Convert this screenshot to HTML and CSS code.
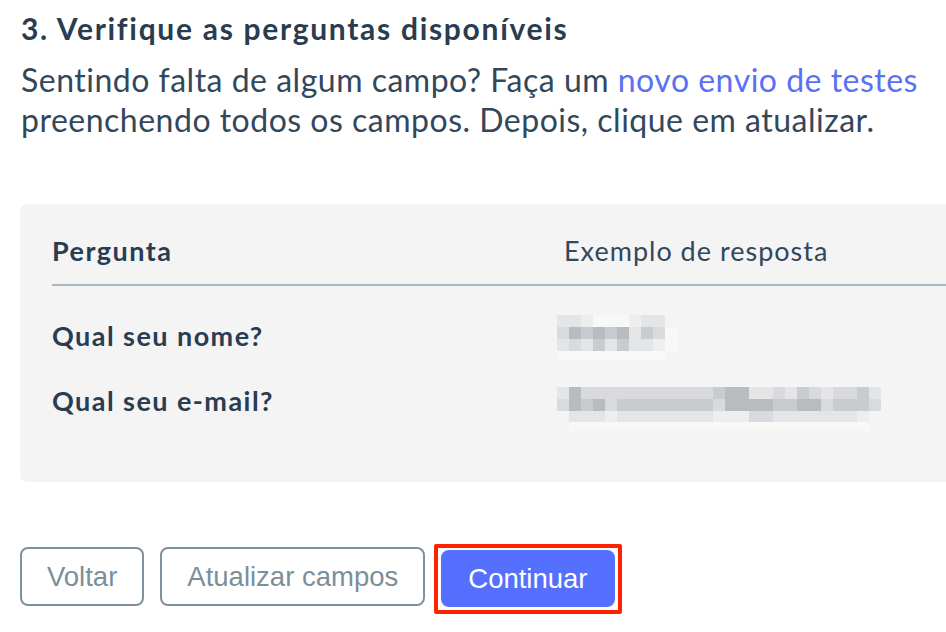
FILE: index.html
```html
<!DOCTYPE html>
<html lang="pt-BR">
<head>
<meta charset="utf-8">
<title>Verifique as perguntas</title>
<link rel="stylesheet" href="styles.css">
</head>
<body>
<main class="page">
  <h2 class="title">3. Verifique as perguntas disponíveis</h2>
  <p class="lead">Sentindo falta de algum campo? Faça um <a class="link" href="#">novo envio de testes</a> preenchendo todos os campos. Depois, clique em atualizar.</p>

  <section class="table-card">
    <div class="thead">
      <div class="th th-q">Pergunta</div>
      <div class="th th-a">Exemplo de resposta</div>
    </div>
    <div class="tbody">
      <div class="row">
        <div class="q">Qual seu nome?</div>
        <div class="a">
          <div class="blur blur-name">
            <i class="s3"></i><i class="s3"></i><i class="s2"></i><i class="s1"></i><i class="s1"></i><i class="s1"></i><i class="s2"></i><i class="s3"></i><i class="s3"></i><i class="s0"></i>
            <i class="s4"></i><i class="s6"></i><i class="s5"></i><i class="s6"></i><i class="s5"></i><i class="s6"></i><i class="s3"></i><i class="s5"></i><i class="s4"></i><i class="s1"></i>
            <i class="s3"></i><i class="s4"></i><i class="s3"></i><i class="s5"></i><i class="s3"></i><i class="s5"></i><i class="s3"></i><i class="s3"></i><i class="s2"></i><i class="s1"></i>
            <i class="s1"></i><i class="s1"></i><i class="s1"></i><i class="s1"></i><i class="s1"></i><i class="s1"></i><i class="s1"></i><i class="s1"></i><i class="s1"></i><i class="s0"></i>
          </div>
        </div>
      </div>
      <div class="row">
        <div class="q">Qual seu e-mail?</div>
        <div class="a">
          <div class="blur blur-mail">
            <i class="s3"></i><i class="s6"></i><i class="s4"></i><i class="s4"></i><i class="s4"></i><i class="s4"></i><i class="s4"></i><i class="s4"></i><i class="s4"></i><i class="s4"></i><i class="s4"></i><i class="s4"></i><i class="s4"></i><i class="s5"></i><i class="s6"></i><i class="s6"></i><i class="s3"></i><i class="s3"></i><i class="s4"></i><i class="s3"></i><i class="s5"></i><i class="s4"></i><i class="s3"></i><i class="s4"></i><i class="s4"></i><i class="s5"></i><i class="s3"></i>
            <i class="s4"></i><i class="s6"></i><i class="s5"></i><i class="s6"></i><i class="s4"></i><i class="s5"></i><i class="s5"></i><i class="s5"></i><i class="s5"></i><i class="s5"></i><i class="s5"></i><i class="s5"></i><i class="s5"></i><i class="s4"></i><i class="s6"></i><i class="s6"></i><i class="s6"></i><i class="s6"></i><i class="s5"></i><i class="s5"></i><i class="s6"></i><i class="s6"></i><i class="s4"></i><i class="s5"></i><i class="s5"></i><i class="s5"></i><i class="s4"></i>
            <i class="s0"></i><i class="s3"></i><i class="s3"></i><i class="s3"></i><i class="s2"></i><i class="s3"></i><i class="s3"></i><i class="s3"></i><i class="s3"></i><i class="s3"></i><i class="s3"></i><i class="s3"></i><i class="s3"></i><i class="s2"></i><i class="s2"></i><i class="s2"></i><i class="s4"></i><i class="s4"></i><i class="s3"></i><i class="s3"></i><i class="s3"></i><i class="s3"></i><i class="s3"></i><i class="s3"></i><i class="s3"></i><i class="s2"></i><i class="s0"></i>
            <i class="s0"></i><i class="s1"></i><i class="s1"></i><i class="s1"></i><i class="s1"></i><i class="s1"></i><i class="s1"></i><i class="s1"></i><i class="s1"></i><i class="s1"></i><i class="s1"></i><i class="s1"></i><i class="s1"></i><i class="s1"></i><i class="s1"></i><i class="s1"></i><i class="s1"></i><i class="s1"></i><i class="s1"></i><i class="s1"></i><i class="s1"></i><i class="s1"></i><i class="s1"></i><i class="s1"></i><i class="s1"></i><i class="s1"></i><i class="s0"></i>
          </div>
        </div>
      </div>
    </div>
  </section>

  <div class="actions">
    <button class="btn btn-outline" type="button">Voltar</button>
    <button class="btn btn-outline" type="button">Atualizar campos</button>
    <span class="highlight"><button class="btn btn-primary" type="button">Continuar</button></span>
  </div>
</main>
</body>
</html>
```

FILE: styles.css
```css
html, body {
  margin: 0;
  padding: 0;
  background: #ffffff;
  overflow: hidden;
}

body {
  font-family: Lato, "Noto Sans", sans-serif;
  color: #2c3e50;
}

.page {
  padding: 10px 0 0 21px;
}

.title {
  margin: 0;
  font-size: 30px;
  line-height: 36px;
  font-weight: 700;
  color: #2a3c50;
  letter-spacing: 1.7px;
  white-space: nowrap;
}

.lead {
  margin: 14px 0 0 0;
  width: 925px;
  font-size: 32px;
  line-height: 40px;
  font-weight: 400;
  color: #33475b;
  letter-spacing: 0.5px;
}

.link {
  color: #5a70f6;
  text-decoration: none;
}

.table-card {
  margin: 64px 0 0 -1px;
  height: 278px;
  box-sizing: border-box;
  background: #f4f4f4;
  border-radius: 7px 0 0 7px;
  padding-left: 32px;
}

.thead {
  display: grid;
  grid-template-columns: 512px 1fr;
  height: 82px;
  align-items: end;
  box-sizing: border-box;
  padding-bottom: 18px;
  border-bottom: 2px solid #a9b9c1;
}

.th {
  font-size: 27px;
  line-height: 30px;
  white-space: nowrap;
}

.th-q {
  font-weight: 700;
  color: #2a3c50;
  letter-spacing: 1.45px;
}

.th-a {
  font-weight: 400;
  color: #33475b;
  letter-spacing: 1px;
}

.tbody {
  padding-top: 17px;
}

.row {
  display: grid;
  grid-template-columns: 505px 1fr;
  height: 65px;
}

.q {
  font-size: 27px;
  line-height: 65px;
  font-weight: 700;
  color: #2a3c50;
  letter-spacing: 1.45px;
  white-space: nowrap;
}

.blur {
  display: grid;
}

.blur i {
  display: block;
}

.blur-name {
  grid-template-columns: repeat(10, 12px);
  grid-template-rows: 12px 12px 12px 9px;
  margin-top: 12px;
}

.blur-mail {
  grid-template-columns: repeat(27, 12px);
  grid-template-rows: 12px 12px 11px 9px;
  margin-top: 19px;
}

.s0 { background: transparent; }
.s1 { background: #f8f8f7; }
.s2 { background: #eeeeef; }
.s3 { background: #e4e5e7; }
.s4 { background: #d8dadd; }
.s5 { background: #c8cbcf; }
.s6 { background: #b8bcc1; }

.actions {
  display: flex;
  align-items: flex-start;
  margin-top: 62px;
  margin-left: -1px;
}

.btn {
  font-family: "Liberation Sans", Arial, sans-serif;
  font-size: 27.5px;
  border-radius: 8px;
  cursor: pointer;
  box-sizing: border-box;
}

.btn-outline {
  height: 59px;
  margin-top: 3px;
  margin-right: 16px;
  padding: 0 25px;
  background: #ffffff;
  border: 2px solid #7e929c;
  color: #7b8f99;
}

.btn-outline + .btn-outline {
  margin-right: 9px;
}

.highlight {
  display: inline-flex;
  border: 4px solid #ff2200;
  padding: 2px 3px 3px 3px;
  border-radius: 2px;
}

.btn-primary {
  height: 57px;
  padding: 0 27px;
  border: none;
  background: #5570fe;
  color: #ffffff;
}
```
